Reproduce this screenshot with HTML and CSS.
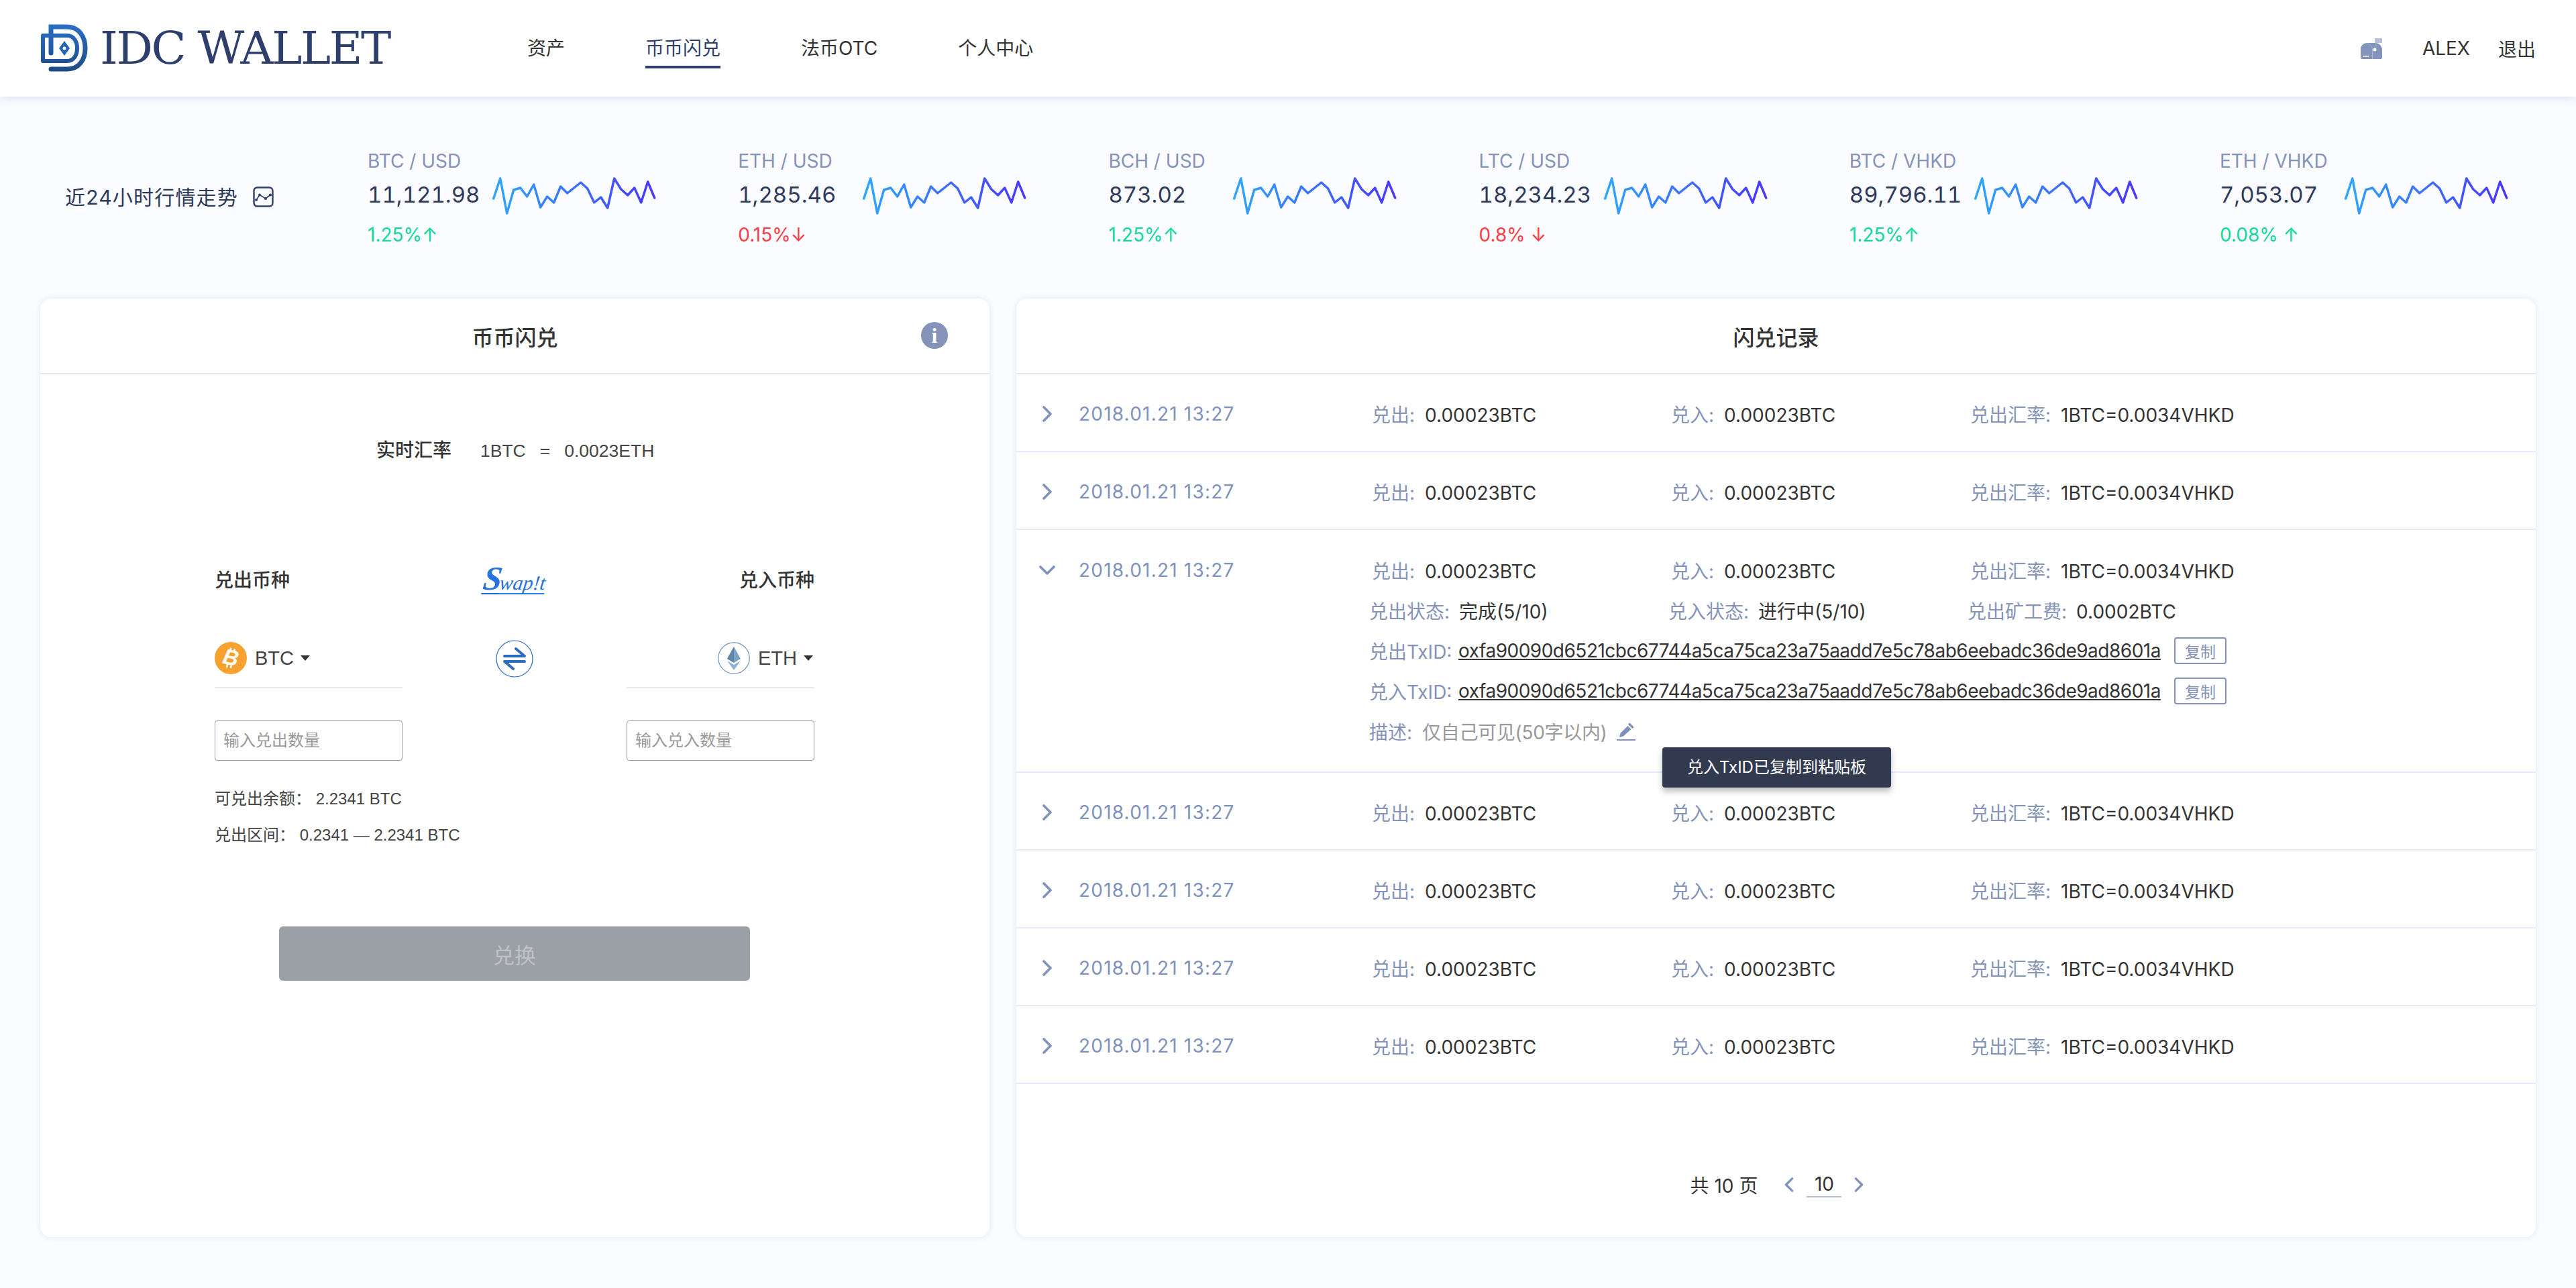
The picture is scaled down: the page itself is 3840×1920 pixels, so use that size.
FILE: index.html
```html
<!DOCTYPE html>
<html>
<head>
  <title>IDC Wallet - 币币闪兑</title>
  <meta charset="UTF-8">
  <link rel="stylesheet" href="styles.css">
</head>
<body>
  <svg class="defs">
    <defs>
      <linearGradient id="sparkGrad" gradientUnits="userSpaceOnUse" x1="0" y1="0" x2="246" y2="0">
        <stop offset="0" stop-color="#2ea9ff"/>
        <stop offset="1" stop-color="#4b35ff"/>
      </linearGradient>
      <linearGradient id="logoGrad" gradientUnits="userSpaceOnUse" x1="0" y1="0" x2="0" y2="72">
        <stop offset="0" stop-color="#2a6fc9"/>
        <stop offset="1" stop-color="#1c4a80"/>
      </linearGradient>
      <symbol id="spark" viewBox="0 0 246 60">
        <polyline fill="none" stroke="url(#sparkGrad)" stroke-width="3.5" stroke-linejoin="round" stroke-linecap="round"
          points="2.7,36 12.7,6 22.7,58 32.7,23 42.7,20 52.7,33 62.7,15 72.7,49 82.7,33 92.7,42 102.7,18 112.7,28 122.7,20 132.7,12 142.7,21 152.7,42 162.7,34 172.7,50 182.7,6 192.7,22 202.7,31 212.7,20 222.7,42 232.7,11 242.7,35"/>
      </symbol>
      <symbol id="chevRight" viewBox="0 0 14 24">
        <path d="M2 2 L12 12 L2 22" fill="none" stroke="#7f92bb" stroke-width="3.6" stroke-linecap="round" stroke-linejoin="round"/>
      </symbol>
      <symbol id="chevDown" viewBox="0 0 24 14">
        <path d="M2 2 L12 12 L22 2" fill="none" stroke="#7f92bb" stroke-width="3.6" stroke-linecap="round" stroke-linejoin="round"/>
      </symbol>
    </defs>
  </svg>

  <header class="topbar">
    <div class="brand">
      <svg class="brand-icon" viewBox="0 0 72 72">
        <path d="M16 43 V4 H40 C58 4 67 19 67 36 C67 53 58 67 40 67 H16" fill="none" stroke="url(#logoGrad)" stroke-width="7" stroke-linecap="round"/>
        <path d="M40 17 H4 V55 H40 C50 55 55 46 55 36 C55 26 50 17 40 17 Z" fill="none" stroke="url(#logoGrad)" stroke-width="6" stroke-linejoin="round"/>
        <path d="M36 25 L44 36 L36 47 L28 36 Z" fill="#2563b5"/>
        <circle cx="36" cy="36" r="2.5" fill="#fff"/>
      </svg>
      <span class="brand-name">IDC WALLET</span>
    </div>
    <nav class="nav">
      <a>资产</a>
      <a class="active">币币闪兑</a>
      <a>法币OTC</a>
      <a>个人中心</a>
    </nav>
    <div class="user">
      <svg class="mailbox" viewBox="0 0 32 32">
        <path d="M10 8 H22 C28 8 32 13 32 19 V30 A2 2 0 0 1 30 32 H2 A2 2 0 0 1 0 30 V17 C0 12 4 8 10 8 Z" fill="#8394bb"/>
        <path d="M10 9.5 C14 9.5 17.5 13 17.5 18 V32" fill="none" stroke="#a9b6d2" stroke-width="1"/>
        <path d="M21 18 V1 H32 V8 H22" fill="#b6c1da"/>
        <circle cx="21" cy="18" r="2.5" fill="#fff"/>
        <rect x="3" y="27" width="9" height="1.6" fill="#fff"/>
      </svg>
      <span class="user-name">ALEX</span>
      <a>退出</a>
    </div>
  </header>

  <section class="ticker">
    <div class="ticker-label">
      <span>近24小时行情走势</span>
      <svg class="trend-icon" viewBox="0 0 32 32">
        <rect x="1.5" y="1.5" width="28" height="28" rx="5" fill="none" stroke="#2e3f6e" stroke-width="2.4"/>
        <path d="M5 20 L10 12.5 L19 18 L26 12.5" fill="none" stroke="#2e3f6e" stroke-width="1.6"/>
        <circle cx="5" cy="20" r="2" fill="#2e3f6e"/>
        <circle cx="10" cy="12.5" r="2" fill="#2e3f6e"/>
        <circle cx="19" cy="18" r="2" fill="#2e3f6e"/>
        <circle cx="26" cy="12.5" r="2" fill="#2e3f6e"/>
      </svg>
    </div>
    <div class="ticker-items">
      <div class="tick">
        <div class="tick-pair">BTC / USD</div>
        <div class="tick-row"><span class="tick-value">11,121.98</span><svg class="spark"><use href="#spark"/></svg></div>
        <div class="tick-change up">1.25%↑</div>
      </div>
      <div class="tick">
        <div class="tick-pair">ETH / USD</div>
        <div class="tick-row"><span class="tick-value">1,285.46</span><svg class="spark"><use href="#spark"/></svg></div>
        <div class="tick-change down">0.15%↓</div>
      </div>
      <div class="tick">
        <div class="tick-pair">BCH / USD</div>
        <div class="tick-row"><span class="tick-value">873.02</span><svg class="spark"><use href="#spark"/></svg></div>
        <div class="tick-change up">1.25%↑</div>
      </div>
      <div class="tick">
        <div class="tick-pair">LTC / USD</div>
        <div class="tick-row"><span class="tick-value">18,234.23</span><svg class="spark"><use href="#spark"/></svg></div>
        <div class="tick-change down">0.8% ↓</div>
      </div>
      <div class="tick">
        <div class="tick-pair">BTC / VHKD</div>
        <div class="tick-row"><span class="tick-value">89,796.11</span><svg class="spark"><use href="#spark"/></svg></div>
        <div class="tick-change up">1.25%↑</div>
      </div>
      <div class="tick">
        <div class="tick-pair">ETH / VHKD</div>
        <div class="tick-row"><span class="tick-value">7,053.07</span><svg class="spark"><use href="#spark"/></svg></div>
        <div class="tick-change up">0.08% ↑</div>
      </div>
    </div>
  </section>

  <main class="panels">
    <section class="panel swap-panel">
      <div class="panel-head">
        <h2>币币闪兑</h2>
        <span class="info">i</span>
      </div>
      <div class="swap-body">
        <div class="rate">
          <strong>实时汇率</strong>
          <span>1BTC</span>
          <span>=</span>
          <span>0.0023ETH</span>
        </div>

        <div class="swap-grid swap-titles">
          <div>兑出币种</div>
          <div class="swapit"><span class="swapit-s">S</span><span class="swapit-rest">wap!t</span></div>
          <div class="align-right">兑入币种</div>
        </div>

        <div class="swap-grid swap-selects">
          <div class="coin-select">
            <svg class="coin" viewBox="0 0 48 48">
              <circle cx="24" cy="24" r="24" fill="#f7a12f"/>
              <text x="24" y="34" text-anchor="middle" class="coin-b" transform="rotate(12 24 24)">B</text>
              <path d="M21 9 V14 M27 9 V14 M21 34 V39 M27 34 V39" stroke="#fff" stroke-width="2.5" transform="rotate(12 24 24)"/>
            </svg>
            <span>BTC</span><i class="caret"></i>
          </div>
          <div class="swap-btn">
            <svg viewBox="0 0 56 56">
              <circle cx="28" cy="28" r="27" fill="#fff" stroke="#2c6cc0" stroke-width="1.2"/>
              <path d="M13 24 H43 L30 13 M43 32 H13 L26 43" fill="none" stroke="#2c6cc0" stroke-width="4" stroke-linecap="round" stroke-linejoin="round"/>
            </svg>
          </div>
          <div class="coin-select align-end">
            <svg class="coin" viewBox="0 0 48 48">
              <circle cx="24" cy="24" r="23.2" fill="#fff" stroke="#6f93bd" stroke-width="1.2"/>
              <path d="M24 7 L34 25 L24 31 L14 25 Z" fill="#7fa1c4"/>
              <path d="M24 7 L24 31 L14 25 Z" fill="#5d87ad"/>
              <path d="M14 28 L24 34 L34 28 L24 42 Z" fill="#8fb0cf"/>
            </svg>
            <span>ETH</span><i class="caret"></i>
          </div>
        </div>

        <div class="swap-grid swap-inputs">
          <input type="text" placeholder="输入兑出数量">
          <div></div>
          <input type="text" placeholder="输入兑入数量">
        </div>

        <div class="swap-info">
          <div>可兑出余额： 2.2341 BTC</div>
          <div>兑出区间： 0.2341 — 2.2341 BTC</div>
        </div>

        <button class="submit">兑换</button>
      </div>
    </section>

    <section class="panel log-panel">
      <div class="panel-head">
        <h2>闪兑记录</h2>
      </div>

      <div class="log-row">
        <svg class="chev"><use href="#chevRight"/></svg>
        <span class="date">2018.01.21 13:27</span>
        <span><em>兑出:</em>0.00023BTC</span>
        <span><em>兑入:</em>0.00023BTC</span>
        <span><em>兑出汇率:</em>1BTC=0.0034VHKD</span>
      </div>
      <div class="log-row">
        <svg class="chev"><use href="#chevRight"/></svg>
        <span class="date">2018.01.21 13:27</span>
        <span><em>兑出:</em>0.00023BTC</span>
        <span><em>兑入:</em>0.00023BTC</span>
        <span><em>兑出汇率:</em>1BTC=0.0034VHKD</span>
      </div>

      <div class="log-open">
        <div class="log-row plain">
          <svg class="chev-down"><use href="#chevDown"/></svg>
          <span class="date">2018.01.21 13:27</span>
          <span><em>兑出:</em>0.00023BTC</span>
          <span><em>兑入:</em>0.00023BTC</span>
          <span><em>兑出汇率:</em>1BTC=0.0034VHKD</span>
        </div>
        <div class="detail">
          <div class="detail-cols">
            <span><em>兑出状态:</em>完成(5/10)</span>
            <span><em>兑入状态:</em>进行中(5/10)</span>
            <span><em>兑出矿工费:</em>0.0002BTC</span>
          </div>
          <div class="detail-line">
            <em>兑出TxID:</em><a class="hash">oxfa90090d6521cbc67744a5ca75ca23a75aadd7e5c78ab6eebadc36de9ad8601a</a><button class="copy">复制</button>
          </div>
          <div class="detail-line">
            <em>兑入TxID:</em><a class="hash">oxfa90090d6521cbc67744a5ca75ca23a75aadd7e5c78ab6eebadc36de9ad8601a</a><button class="copy">复制</button>
          </div>
          <div class="detail-line">
            <em class="short">描述:</em><span class="muted">仅自己可见(50字以内)</span>
            <svg class="pen" viewBox="0 0 28 28">
              <path d="M4 23 L5.5 17 L16.5 6 L21.5 11 L10 21.5 Z" fill="#7f92bb"/>
              <path d="M19 3.5 L23.5 8" stroke="#7f92bb" stroke-width="3.4" stroke-linecap="round"/>
              <rect x="0" y="26" width="28" height="2" fill="#7f92bb"/>
            </svg>
          </div>
        </div>
      </div>

      <div class="log-row">
        <svg class="chev"><use href="#chevRight"/></svg>
        <span class="date">2018.01.21 13:27</span>
        <span><em>兑出:</em>0.00023BTC</span>
        <span><em>兑入:</em>0.00023BTC</span>
        <span><em>兑出汇率:</em>1BTC=0.0034VHKD</span>
      </div>
      <div class="log-row">
        <svg class="chev"><use href="#chevRight"/></svg>
        <span class="date">2018.01.21 13:27</span>
        <span><em>兑出:</em>0.00023BTC</span>
        <span><em>兑入:</em>0.00023BTC</span>
        <span><em>兑出汇率:</em>1BTC=0.0034VHKD</span>
      </div>
      <div class="log-row">
        <svg class="chev"><use href="#chevRight"/></svg>
        <span class="date">2018.01.21 13:27</span>
        <span><em>兑出:</em>0.00023BTC</span>
        <span><em>兑入:</em>0.00023BTC</span>
        <span><em>兑出汇率:</em>1BTC=0.0034VHKD</span>
      </div>
      <div class="log-row">
        <svg class="chev"><use href="#chevRight"/></svg>
        <span class="date">2018.01.21 13:27</span>
        <span><em>兑出:</em>0.00023BTC</span>
        <span><em>兑入:</em>0.00023BTC</span>
        <span><em>兑出汇率:</em>1BTC=0.0034VHKD</span>
      </div>

      <div class="pager">
        <span class="pager-total">共 10 页</span>
        <svg class="pager-arrow flip"><use href="#chevRight"/></svg>
        <span class="pager-num">10</span>
        <svg class="pager-arrow"><use href="#chevRight"/></svg>
      </div>

      <div class="toast">兑入TxID已复制到粘贴板</div>
    </section>
  </main>
</body>
</html>
```

FILE: styles.css
```css
* { box-sizing: border-box; }
html, body { margin: 0; padding: 0; }
body { width: 3840px; height: 1920px; overflow: hidden; background: #fbfcff; color: #333; font-family: Inter, "Noto Sans CJK SC", sans-serif; font-size: 28px; }
.defs { position: absolute; width: 0; height: 0; }
em { font-style: normal; color: #8593b8; }

/* top bar */
.topbar { height: 144px; background: #fff; box-shadow: 0 2px 12px rgba(60, 80, 130, .18); display: flex; align-items: center; padding: 0 60px; position: relative; }
.brand { display: flex; align-items: center; width: 726px; }
.brand-icon { width: 72px; height: 72px; }
.brand-name { font-family: "DejaVu Serif", serif; font-size: 68px; color: #2e3f6e; margin-left: 17px; letter-spacing: -2.4px; line-height: 72px; white-space: nowrap; }
.nav { display: flex; gap: 120px; }
.nav a { height: 60px; line-height: 60px; }
.nav a.active { color: #2e3f6e; border-bottom: 4px solid #2e3f6e; }
.user { margin-left: auto; display: flex; align-items: center; }
.mailbox { width: 32px; height: 32px; margin-right: 60px; }
.user-name { margin-right: 42px; }

/* ticker */
.ticker { height: 301px; display: flex; padding-top: 80px; }
.ticker-label { flex: none; width: 548px; padding: 50px 0 0 97px; display: flex; align-items: flex-start; color: #2e3a5c; font-size: 30px; line-height: 40px; letter-spacing: 1.2px; }
.trend-icon { width: 32px; height: 32px; margin: 4px 0 0 22px; }
.ticker-items { flex: none; display: grid; grid-template-columns: repeat(6, 552.2px); }
.tick-pair { height: 36px; line-height: 32px; color: #8593b8; }
.tick-row { display: flex; align-items: center; height: 60px; }
.tick-value { width: 185px; font-size: 33px; color: #2e3a5c; font-variant-numeric: tabular-nums; }
.spark { width: 246px; height: 60px; }
.tick-change { margin-top: 14px; line-height: 32px; }
.up { color: #12d89b; }
.down { color: #fb3c46; }

/* panels */
.panels { display: grid; grid-template-columns: 1415px 2265px; gap: 40px; padding: 0 60px; }
.panel { height: 1399px; background: #fff; border-radius: 16px; box-shadow: 0 0 10px rgba(80, 100, 160, .14); position: relative; }
.panel-head { height: 113px; border-bottom: 2px solid #e4e7f2; display: flex; align-items: center; justify-content: center; position: relative; }
.panel-head h2 { margin: 0; font-size: 32px; font-weight: 500; color: #333; }
.info { position: absolute; right: 62px; top: 35px; width: 40px; height: 40px; border-radius: 50%; background: #8593b8; color: #fff; font: bold 32px/40px "Liberation Serif", serif; text-align: center; }

/* swap form */
.swap-body { padding: 0 261px 0 260px; font-family: "Liberation Sans", "Noto Sans CJK SC", sans-serif; }
.rate { margin-top: 94px; height: 40px; line-height: 40px; display: flex; gap: 21px; padding-left: 241px; color: #444; font-size: 26.5px; }
.rate strong { font-size: 28px; font-weight: 500; margin-right: 22px; color: #333; }
.swap-grid { display: grid; grid-template-columns: 280px 334px 280px; }
.swap-titles { margin-top: 154px; height: 40px; line-height: 40px; font-weight: 500; }
.align-right { text-align: right; }
.swapit { display: flex; justify-content: center; align-items: flex-end; height: 40px; color: #2673dc; font-family: "Liberation Serif", serif; font-style: italic; font-weight: normal; transform: skewX(-8deg); }
.swapit-s { font-size: 50px; line-height: 44px; font-weight: bold; margin-right: -3px; border-bottom: 2px solid #1f6bd6; }
.swapit-rest { font-size: 30px; line-height: 30px; border-bottom: 2px solid #2d7be6; height: 32px; }
.swap-selects { margin-top: 72px; }
.coin-select { height: 68px; padding-bottom: 20px; border-bottom: 2px solid #e8e9ee; display: flex; align-items: center; font-size: 29px; color: #444; }
.align-end { justify-content: flex-end; padding-right: 2px; }
.coin { width: 48px; height: 48px; margin-right: 12px; }
.coin-b { font: italic bold 32px "Liberation Sans", sans-serif; fill: #fff; }
.caret { width: 0; height: 0; border-left: 7.5px solid transparent; border-right: 7.5px solid transparent; border-top: 8px solid #333; margin-left: 10px; }
.swap-btn { display: flex; justify-content: center; height: 56px; margin-top: -4px; }
.swap-btn svg { width: 56px; height: 56px; }
.swap-inputs { margin-top: 48px; }
.swap-inputs input { width: 280px; height: 60px; border: 1px solid #999; border-radius: 4px; padding: 0 12px; font-size: 24px; font-family: inherit; background: #fff; }
.swap-inputs input::placeholder { color: #999; }
.swap-info { margin-top: 30px; font-size: 24px; line-height: 54px; color: #444; }
.submit { display: block; margin: 109px 0 0 96px; width: 702px; height: 81px; background: #9b9fa6; color: #bfc2c6; border: none; border-radius: 6px; font-size: 32px; font-family: inherit; }

/* records */
.log-row { height: 116px; padding-top: 3px; border-bottom: 2px solid #e6eafa; padding-left: 35px; display: grid; grid-template-columns: 58px 437px 446px 446px auto; align-items: center; }
.log-row em { margin-right: 15px; }
.log-row.plain { height: 60px; border-bottom: none; padding-top: 0; }
.log-open { height: 362px; border-bottom: 2px solid #e6eafa; padding-top: 30px; }
.chev { width: 14px; height: 24px; margin-left: 4px; }
.chev-down { width: 24px; height: 14px; margin-left: -1px; }
.date { color: #7f92bb; letter-spacing: 1.2px; }
.detail { padding-left: 526px; }
.detail-cols { display: grid; grid-template-columns: 446px 446px auto; height: 60px; align-items: center; }
.detail-cols em { margin-right: 14px; }
.detail-line { height: 60px; display: flex; align-items: center; }
.detail-line em { width: 133px; }
.detail-line em.short { width: 79px; }
.hash { text-decoration: underline; letter-spacing: -.5px; color: #333; }
.copy { width: 78px; height: 40px; margin-left: 20px; padding: 0; background: #fff; border: 2px solid #8593b8; border-radius: 4px; color: #8593b8; font-size: 23px; font-family: inherit; }
.muted { color: #999; letter-spacing: -.3px; }
.pen { width: 28px; height: 28px; margin-left: 14px; }
.pager { display: flex; align-items: center; justify-content: center; margin-top: 130px; height: 40px; padding-left: 22px; }
.pager-arrow { width: 14px; height: 22px; margin: 0 19px; }
.pager-arrow.flip { transform: scaleX(-1); margin-left: 40px; }
.pager-num { width: 52px; text-align: center; border-bottom: 2px solid #b5bcd2; line-height: 36px; }
.toast { position: absolute; left: 963px; top: 669px; width: 341px; height: 60px; line-height: 60px; text-align: center; background: #323a50; color: #fff; font-size: 24px; border-radius: 4px; box-shadow: 0 6px 10px rgba(0, 0, 0, .25); }
```
